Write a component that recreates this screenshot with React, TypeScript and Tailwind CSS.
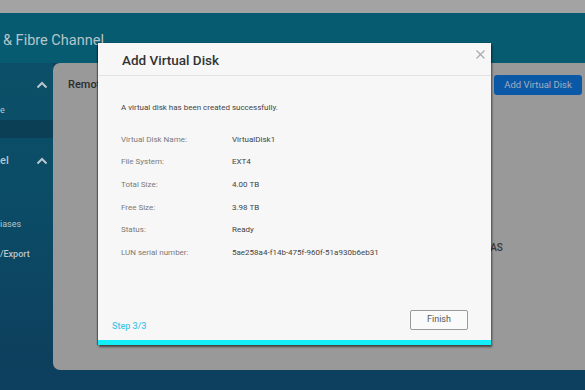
import React from 'react';

const ROWS: [string, string][] = [
  ['Virtual Disk Name:', 'VirtualDisk1'],
  ['File System:', 'EXT4'],
  ['Total Size:', '4.00 TB'],
  ['Free Size:', '3.98 TB'],
  ['Status:', 'Ready'],
  ['LUN serial number:', '5ae258a4-f14b-475f-960f-51a930b6eb31'],
];

function Chevron() {
  return (
    <svg width="12" height="8" viewBox="0 0 12 8" fill="none">
      <path d="M1.5 6.5 6 2l4.5 4.5" stroke="#b9c6cc" strokeWidth="2" />
    </svg>
  );
}

function Sidebar() {
  return (
    <div className="flex w-[53px] shrink-0 flex-col bg-gradient-to-b from-[#0b5068] via-[#0b4b66] to-[#0d3f5d] text-[#b9c6cc]">
      <div className="flex h-[42px] items-center justify-end pr-[5px] pt-[2px]">
        <Chevron />
      </div>
      <div className="flex h-[15px] items-center pb-[4px] text-[9px]">e</div>
      <div className="h-[18px] bg-[#0a3f56]" />
      <div className="flex h-[44px] items-center justify-between pr-[5px] pt-[2px]">
        <span className="text-[11px] font-medium">el</span>
        <Chevron />
      </div>
      <div className="h-[28px]" />
      <div className="flex h-[30px] items-center text-[9px]">iases</div>
      <div className="flex h-[30px] items-center text-[9px] font-medium">/Export</div>
    </div>
  );
}

function Modal() {
  return (
    <div className="absolute left-[98px] top-[43px] flex h-[302px] w-[393px] flex-col bg-[#f7f7f7] shadow-[1px_2px_2px_rgba(0,0,0,0.55),-1px_0_1px_rgba(0,0,0,0.4)]">
      <div className="relative flex h-[33px] shrink-0 items-center border-b border-[#e3e3e3] pl-[24px] pt-[3px]">
        <span className="text-[13.5px] font-medium text-[#333]">Add Virtual Disk</span>
        <svg className="absolute right-[6px] top-[7px]" width="9" height="9" viewBox="0 0 9 9">
          <path d="M0.5 0.5l8 8M8.5 0.5l-8 8" stroke="#a8a8a8" strokeWidth="1.1" />
        </svg>
      </div>
      <div className="flex-1 px-[23px] pt-[27px]">
        <p className="text-[8px] leading-[10px] text-[#444]">A virtual disk has been created successfully.</p>
        <div className="mt-[15.5px] flex flex-col">
          {ROWS.map(([k, v]) => (
            <div key={k} className="flex h-[22.6px] items-center text-[8px]">
              <span className="w-[111px] text-[#7a7a7a]">{k}</span>
              <span className="text-[#444]">{v}</span>
            </div>
          ))}
        </div>
      </div>
      <div className="flex h-[36px] shrink-0 items-start justify-between pl-[14px] pr-[23px] pt-[6px]">
        <span className="mt-[10px] text-[9px] font-medium text-[#4cc6e6]">Step 3/3</span>
        <button className="h-[20px] w-[58px] rounded-[2px] border border-[#9a9a9a] bg-[#fafafa] text-[9px] text-[#555]">
          Finish
        </button>
      </div>
      <div className="h-[5px] shrink-0 bg-[#14eef8]" />
    </div>
  );
}

export default function App() {
  return (
    <div className="relative h-[390px] w-[585px] overflow-hidden bg-[#0d3f5e] font-['Roboto',sans-serif]">
      <div className="h-[13px] bg-[#a3a3a3]" />
      <div className="flex h-[50px] items-center bg-[#075b70] pl-[3px] pt-[6px]">
        <span className="text-[14.5px] text-[#b5c5cb]">&amp; Fibre Channel</span>
      </div>
      <div className="flex h-[307px]">
        <Sidebar />
        <div className="flex flex-1 flex-col rounded-l-[7px] bg-[#999999]">
          <div className="flex h-[44px] items-center justify-between pl-[15px] pr-[3px]">
            <span className="text-[11px] font-medium text-[#2c2c2c]">Remote Disk</span>
            <span className="flex h-[20px] w-[88px] items-center justify-center rounded-[3px] bg-[#0b58a6] text-[9.5px] text-[#a2b0c0]">
              Add Virtual Disk
            </span>
          </div>
          <div className="mt-[133px] pl-[430px] text-[10px] font-medium text-[#3a3a3a]">NAS</div>
        </div>
      </div>
      <Modal />
    </div>
  );
}
